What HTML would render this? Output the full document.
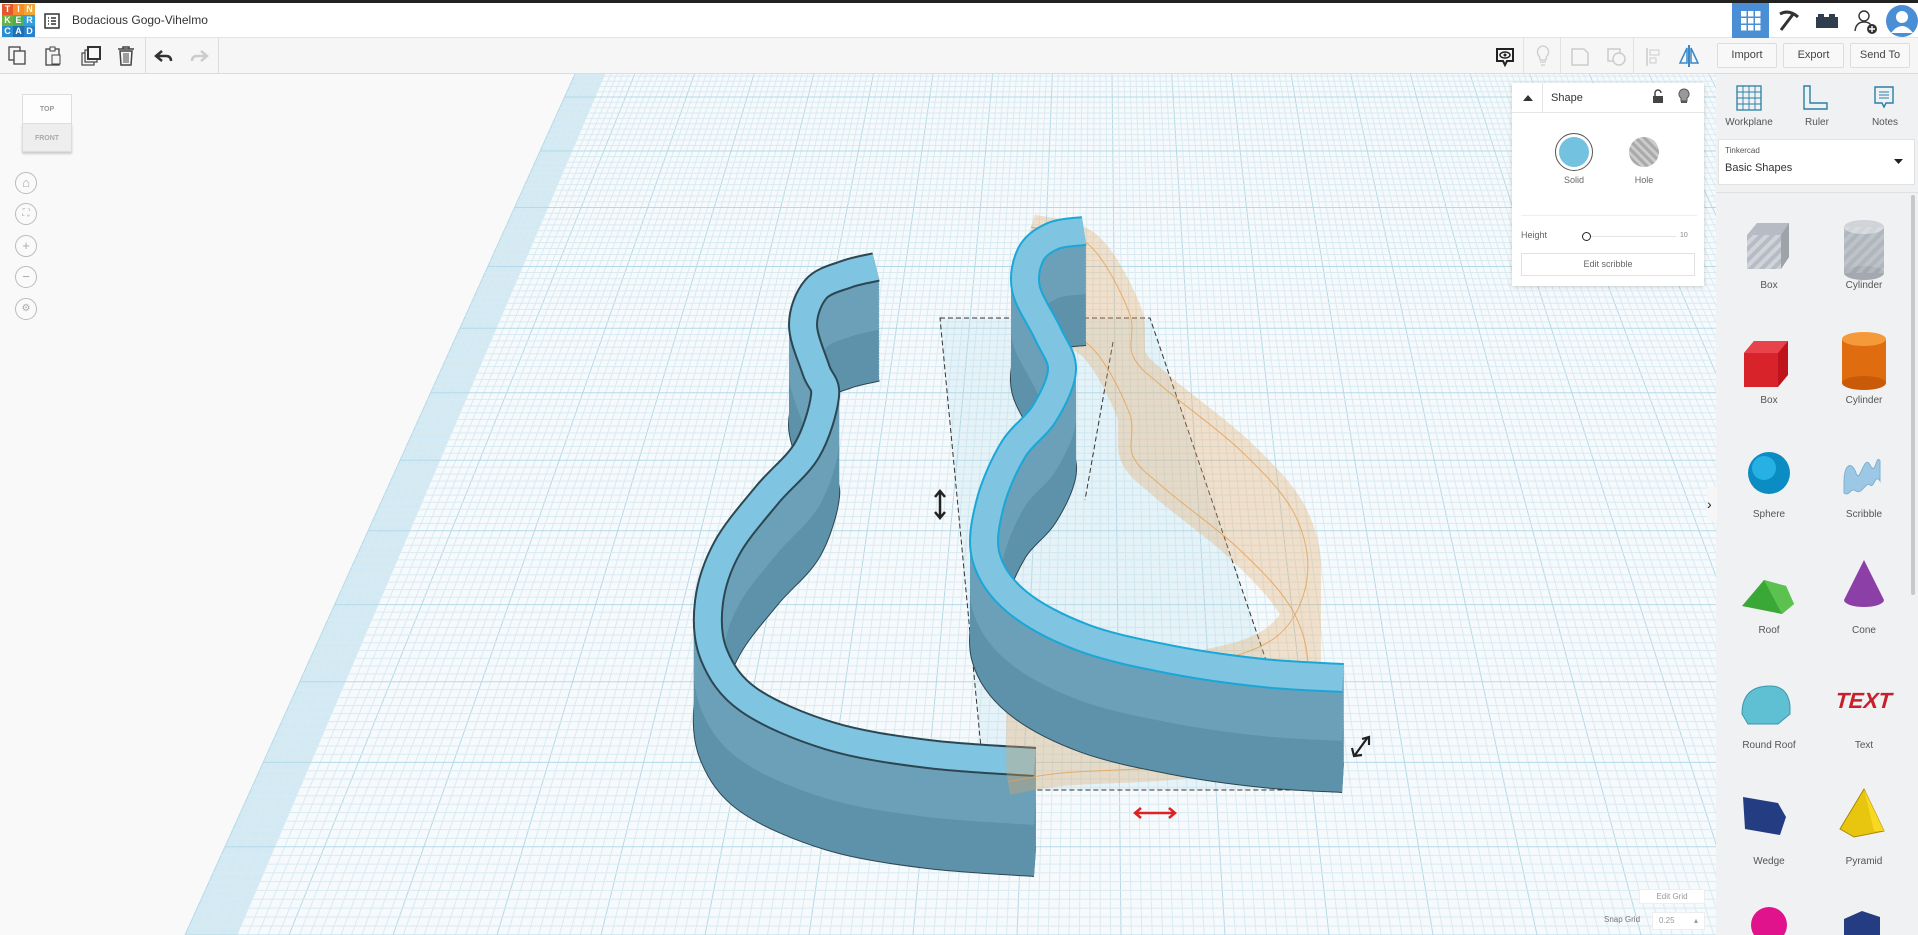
<!DOCTYPE html>
<html><head><meta charset="utf-8"><style>
*{box-sizing:border-box;margin:0;padding:0}
body{width:1918px;height:935px;overflow:hidden;background:#f9f9f9;font-family:"Liberation Sans",sans-serif;position:relative;color:#444}
.abs{position:absolute}
#hdr{left:0;top:0;width:1918px;height:38px;background:#fff;border-top:3px solid #222;border-bottom:1px solid #e3e3e3}
#tb{left:0;top:38px;width:1918px;height:36px;background:#f6f6f6;border-bottom:1px solid #dcdcdc}
.btn{position:absolute;top:5px;height:25px;border:1px solid #ddd;background:#f8f8f8;font-size:11px;color:#444;text-align:center;line-height:23px;border-radius:2px}
#rp{left:1716px;top:74px;width:202px;height:861px;background:#f0f1f3}
.lbl{position:absolute;font-size:10px;color:#555;text-align:center;width:90px}
.nav{position:absolute;left:15px;width:22px;height:22px;border:1px solid #bbb;border-radius:50%;background:#fafafa;color:#aaa;font-size:13px;text-align:center;line-height:19px}
</style></head><body>
<svg id="cv" class="abs" style="left:0;top:74px" width="1918" height="861"></svg>

<div id="hdr" class="abs">
 <div class="abs" style="left:2px;top:1px;width:33px;height:33px;display:grid;grid-template-columns:repeat(3,11px);font-size:9px;font-weight:bold;color:#fff;text-align:center;line-height:11px">
  <span style="background:#e4572e">T</span><span style="background:#f48d2a">I</span><span style="background:#f1a638">N</span>
  <span style="background:#66b245">K</span><span style="background:#4fae52">E</span><span style="background:#2e9fd8">R</span>
  <span style="background:#2a8fd0">C</span><span style="background:#1f6fb4">A</span><span style="background:#2b80c7">D</span>
 </div>
 <svg class="abs" style="left:44px;top:10px" width="16" height="16"><rect x="1" y="1" width="14" height="14" fill="none" stroke="#333" stroke-width="1.5"/><path d="M4 5h1M7 5h5M4 8h1M7 8h5M4 11h1M7 11h5" stroke="#333" stroke-width="1.4"/></svg>
 <div class="abs" style="left:72px;top:10px;font-size:12px;color:#333">Bodacious Gogo-Vihelmo</div>
 <div class="abs" style="left:1732px;top:0;width:37px;height:35px;background:#4a8ed6"></div>
 <svg class="abs" style="left:1741px;top:8px" width="20" height="20"><g fill="#fff"><rect x="0" y="0" width="5.5" height="5.5"/><rect x="7" y="0" width="5.5" height="5.5"/><rect x="14" y="0" width="5.5" height="5.5"/><rect x="0" y="7" width="5.5" height="5.5"/><rect x="7" y="7" width="5.5" height="5.5"/><rect x="14" y="7" width="5.5" height="5.5"/><rect x="0" y="14" width="5.5" height="5.5"/><rect x="7" y="14" width="5.5" height="5.5"/><rect x="14" y="14" width="5.5" height="5.5"/></g></svg>
 <svg class="abs" style="left:1777px;top:6px" width="24" height="24"><path d="M3 5 Q12 0 21 8 M17 4 L4 21" stroke="#333" stroke-width="3" fill="none"/></svg>
 <svg class="abs" style="left:1815px;top:10px" width="24" height="16"><rect x="1" y="4" width="22" height="11" fill="#2e3e4e"/><rect x="3" y="1" width="6" height="4" fill="#2e3e4e"/><rect x="14" y="1" width="6" height="4" fill="#2e3e4e"/></svg>
 <svg class="abs" style="left:1854px;top:6px" width="24" height="26"><circle cx="10" cy="7" r="5" fill="none" stroke="#333" stroke-width="1.4"/><path d="M1 22 Q2 13 10 13 Q15 13 17 16" fill="none" stroke="#333" stroke-width="1.4"/><circle cx="18" cy="20" r="5" fill="#333"/><path d="M18 17v6M15 20h6" stroke="#fff" stroke-width="1.4"/></svg>
 <svg class="abs" style="left:1885px;top:1px" width="33" height="34"><circle cx="17" cy="17" r="16" fill="#4a8ed6"/><circle cx="17" cy="13" r="6" fill="#fff"/><path d="M6 29 Q17 15 28 29" fill="#fff"/></svg>
</div>

<div id="tb" class="abs">
 <svg class="abs" style="left:8px;top:8px" width="20" height="20"><rect x="1" y="1" width="11" height="13" fill="none" stroke="#444" stroke-width="1.3"/><rect x="6" y="5" width="11" height="13" fill="#f6f6f6" stroke="#444" stroke-width="1.3"/></svg>
 <svg class="abs" style="left:43px;top:7px" width="20" height="22"><rect x="3" y="4" width="13" height="16" fill="none" stroke="#444" stroke-width="1.3"/><rect x="7" y="2" width="5" height="4" fill="#f6f6f6" stroke="#444"/><rect x="9" y="10" width="8" height="9" fill="#f6f6f6" stroke="#444"/></svg>
 <svg class="abs" style="left:80px;top:7px" width="22" height="22"><rect x="2" y="8" width="12" height="12" fill="none" stroke="#444" stroke-width="1.2"/><rect x="5" y="5" width="12" height="12" fill="#f6f6f6" stroke="#444" stroke-width="1.2"/><rect x="8" y="2" width="12" height="12" fill="#f6f6f6" stroke="#333" stroke-width="2"/></svg>
 <svg class="abs" style="left:116px;top:7px" width="20" height="22"><path d="M2 4h16M7 4V2h6v2" stroke="#444" stroke-width="1.5" fill="none"/><path d="M4 6h12l-1 14H5z" fill="none" stroke="#444" stroke-width="1.5"/><path d="M8 8v10M10 8v10M12 8v10" stroke="#444"/></svg>
 <div class="abs" style="left:145px;top:0;width:1px;height:36px;background:#ddd"></div>
 <svg class="abs" style="left:154px;top:11px" width="20" height="14"><path d="M8 2 L2 7 L8 12 M2 7 H12 Q17 7 17 12" stroke="#333" stroke-width="2.5" fill="none"/></svg>
 <svg class="abs" style="left:189px;top:11px" width="20" height="14"><path d="M12 2 L18 7 L12 12 M18 7 H8 Q3 7 3 12" stroke="#ccc" stroke-width="2.5" fill="none"/></svg>
 <div class="abs" style="left:218px;top:0;width:1px;height:36px;background:#ddd"></div>
 <svg class="abs" style="left:1495px;top:8px" width="20" height="22"><path d="M2 3h16v12H12l-2 4-2-4H2z" fill="none" stroke="#222" stroke-width="2"/><ellipse cx="10" cy="9" rx="5" ry="3" fill="none" stroke="#222" stroke-width="1.5"/><circle cx="10" cy="9" r="1.5" fill="#222"/></svg>
 <div class="abs" style="left:1523px;top:0;width:1px;height:36px;background:#e2e2e2"></div>
 <svg class="abs" style="left:1535px;top:7px" width="16" height="22"><path d="M8 1a6 6 0 0 0-4 10c1 1 1 3 1 4h6c0-1 0-3 1-4A6 6 0 0 0 8 1zM5 17h6M6 20h4" fill="none" stroke="#ccc" stroke-width="1.3"/></svg>
 <div class="abs" style="left:1560px;top:0;width:1px;height:36px;background:#e2e2e2"></div>
 <svg class="abs" style="left:1570px;top:9px" width="22" height="20"><path d="M2 2h12l4 4v12H2z" fill="none" stroke="#ccc" stroke-width="1.5"/></svg>
 <svg class="abs" style="left:1606px;top:9px" width="22" height="20"><rect x="2" y="2" width="12" height="12" fill="none" stroke="#ccc" stroke-width="1.5"/><circle cx="13" cy="12" r="6" fill="#f6f6f6" stroke="#ccc" stroke-width="1.5"/></svg>
 <div class="abs" style="left:1633px;top:0;width:1px;height:36px;background:#e2e2e2"></div>
 <svg class="abs" style="left:1645px;top:9px" width="18" height="20"><path d="M2 1v18" stroke="#ccc" stroke-width="1.5"/><rect x="5" y="3" width="9" height="5" fill="none" stroke="#ccc"/><rect x="5" y="11" width="6" height="5" fill="none" stroke="#ccc"/></svg>
 <svg class="abs" style="left:1677px;top:6px" width="24" height="24"><path d="M10 4L3 19h7z" fill="none" stroke="#3a88c8" stroke-width="1.5"/><path d="M14 4l7 15h-7z" fill="none" stroke="#3a88c8" stroke-width="1.5"/><path d="M12 1v22" stroke="#3a88c8" stroke-width="2"/></svg>
 <div class="btn" style="left:1717px;width:60px">Import</div>
 <div class="btn" style="left:1783px;width:61px">Export</div>
 <div class="btn" style="left:1850px;width:60px">Send To</div>
</div>

<div class="abs" style="left:22px;top:94px;width:50px;height:29px;background:#fdfdfd;border:1px solid #ddd;border-bottom:none;font-size:7px;color:#999;text-align:center;line-height:29px;font-weight:bold">TOP</div>
<div class="abs" style="left:22px;top:123px;width:50px;height:29px;background:#eee;border:1px solid #ddd;font-size:7px;color:#aaa;text-align:center;line-height:29px;font-weight:bold;box-shadow:0 2px 2px #ccc">FRONT</div>
<div class="nav" style="top:172px">⌂</div>
<div class="nav" style="top:203px;font-size:10px">⛶</div>
<div class="nav" style="top:235px">+</div>
<div class="nav" style="top:266px">−</div>
<div class="nav" style="top:298px;font-size:10px">⚙</div>

<div class="abs" style="left:1512px;top:83px;width:192px;height:203px;background:#fff;box-shadow:0 1px 4px rgba(0,0,0,.18)">
 <div class="abs" style="left:0;top:0;width:192px;height:30px;border-bottom:1px solid #e5e5e5"></div>
 <div class="abs" style="left:30px;top:0;width:1px;height:30px;background:#e5e5e5"></div>
 <svg class="abs" style="left:10px;top:11px" width="12" height="8"><path d="M1 7L6 1l5 6z" fill="#333"/></svg>
 <div class="abs" style="left:39px;top:9px;font-size:11px;color:#333">Shape</div>
 <svg class="abs" style="left:140px;top:6px" width="12" height="14"><path d="M3 7V4a3 3 0 0 1 6 0" fill="none" stroke="#444" stroke-width="1.5"/><rect x="1" y="7" width="10" height="7" fill="#444"/></svg>
 <svg class="abs" style="left:166px;top:5px" width="12" height="16"><path d="M6 1a5 5 0 0 0-3 9v3h6v-3a5 5 0 0 0-3-9z" fill="#999" stroke="#555"/><rect x="3" y="13" width="6" height="2" fill="#555"/></svg>
 <div class="abs" style="left:43px;top:50px;width:38px;height:38px;border-radius:50%;border:1px solid #555;background:#fff"></div>
 <div class="abs" style="left:47px;top:54px;width:30px;height:30px;border-radius:50%;background:#72c2e0"></div>
 <div class="abs" style="left:117px;top:54px;width:30px;height:30px;border-radius:50%;background:repeating-linear-gradient(45deg,#aaa 0 3px,#ccc 3px 6px)"></div>
 <div class="abs" style="left:17px;top:92px;width:90px;font-size:9px;color:#666;text-align:center">Solid</div>
 <div class="abs" style="left:87px;top:92px;width:90px;font-size:9px;color:#666;text-align:center">Hole</div>
 <div class="abs" style="left:9px;top:132px;width:176px;height:1px;background:#eee"></div>
 <div class="abs" style="left:9px;top:147px;font-size:9px;color:#666">Height</div>
 <div class="abs" style="left:78px;top:153px;width:86px;height:1px;background:#e5e5e5"></div>
 <div class="abs" style="left:70px;top:149px;width:9px;height:9px;border-radius:50%;border:1.5px solid #222;background:#fff"></div>
 <div class="abs" style="left:168px;top:149px;font-size:7px;color:#888">10</div>
 <div class="abs" style="left:9px;top:170px;width:174px;height:23px;border:1px solid #e2e2e2;font-size:9px;color:#666;text-align:center;line-height:21px">Edit scribble</div>
</div>

<div id="rp" class="abs">
 <svg class="abs" style="left:20px;top:11px" width="26" height="26"><rect x="1" y="1" width="24" height="24" fill="none" stroke="#2a7fa6" stroke-width="1.3"/><path d="M7 1v24M13 1v24M19 1v24M1 7h24M1 13h24M1 19h24" stroke="#2a7fa6" stroke-width=".9"/></svg>
 <div class="lbl" style="left:-12px;top:43px">Workplane</div>
 <svg class="abs" style="left:86px;top:11px" width="26" height="26"><path d="M2 1h6v17h17v6H2z" fill="none" stroke="#2a7fa6" stroke-width="1.4"/></svg>
 <div class="lbl" style="left:56px;top:43px">Ruler</div>
 <svg class="abs" style="left:157px;top:11px" width="22" height="26"><path d="M2 2h18v16h-7l-2 4-2-4H2z" fill="none" stroke="#2a7fa6" stroke-width="1.4"/><path d="M6 7h10M6 10h10M6 13h10" stroke="#2a7fa6"/></svg>
 <div class="lbl" style="left:124px;top:43px">Notes</div>
 <div class="abs" style="left:2px;top:65px;width:197px;height:46px;background:#fff;border:1px solid #e2e2e2"></div>
 <div class="abs" style="left:9px;top:72px;font-size:8px;color:#555">Tinkercad</div>
 <div class="abs" style="left:9px;top:88px;font-size:11px;color:#333">Basic Shapes</div>
 <svg class="abs" style="left:178px;top:85px" width="9" height="6"><path d="M0 0h9L4.5 5z" fill="#222"/></svg>
 <div class="abs" style="left:0;top:118px;width:202px;height:1px;background:#e0e0e0"></div>
 <div class="abs" style="left:195px;top:121px;width:4px;height:400px;background:#c8c8c8;border-radius:2px"></div>
</div>
<div class="abs" style="left:1707px;top:487px;width:10px;height:34px;background:#f6f6f6;font-size:14px;line-height:34px;color:#222">›</div>

<svg class="abs" style="left:1716px;top:195px" width="195" height="740">
 <defs><pattern id="st" width="8" height="8" patternUnits="userSpaceOnUse" patternTransform="rotate(45)"><rect width="4" height="8" fill="#ffffff" opacity=".35"/></pattern></defs>
 <g transform="translate(53,58)"><path d="M-22 -18l10-12h32v34l-8 12h-34z" fill="#b7bcc4"/><path d="M-22 -18h34v34h-34z" fill="url(#st)"/><path d="M12 -18l8-12v34l-8 12z" fill="#9ea3aa"/></g>
 <g transform="translate(148,58)"><rect x="-20" y="-26" width="40" height="46" fill="#b0b6bd"/><ellipse cx="0" cy="20" rx="20" ry="7" fill="#a4a9b0"/><ellipse cx="0" cy="-26" rx="20" ry="7" fill="#d0d4d8"/><rect x="-20" y="-26" width="40" height="46" fill="url(#st)" opacity=".5"/></g>
 <g transform="translate(53,170)"><path d="M-25 -12l10-12h34v34l-10 12h-34z" fill="#c0141c"/><path d="M-25 -12h34v34h-34z" fill="#d8232a"/><path d="M-25 -12l10-12h34l-10 12z" fill="#e8434a"/></g>
 <g transform="translate(148,170)"><rect x="-22" y="-26" width="44" height="44" fill="#e06c10"/><ellipse cx="0" cy="18" rx="22" ry="7" fill="#c85a08"/><ellipse cx="0" cy="-26" rx="22" ry="7" fill="#f59a3a"/></g>
 <g transform="translate(53,278)"><circle r="21" fill="#0b8cc2"/><circle cx="-5" cy="-5" r="12" fill="#26b0e3"/></g>
 <g transform="translate(148,278)"><path d="M-20 10c0-20 8-22 12-10s8-20 14-8 6-12 10-4v20c-5-8-6 8-10 4s-8 10-14 6-6 6-12 2z" fill="#9cc8e6" stroke="#7fb0d0"/></g>
 <g transform="translate(53,393)"><path d="M-27 18l22-26 22 6 8 18-12 10z" fill="#3aa836"/><path d="M-5 -8l22 6 8 18-12 10z" fill="#5cc24f"/></g>
 <g transform="translate(148,393)"><path d="M0 -28L-20 12a20 7 0 0 0 40 0z" fill="#8c3fa6"/></g>
 <g transform="translate(53,505)"><path d="M-27 14q0-28 28-28q18 0 20 20v8l-12 10h-30z" fill="#5fbfd3" stroke="#3c97ab"/></g>
 <g transform="translate(148,505)"><text x="-28" y="8" font-size="22" font-weight="bold" fill="#c8202a" font-family="Liberation Sans" transform="skewX(-15)">TEXT</text></g>
 <g transform="translate(53,622)"><path d="M-26 -20l35 6 8 14-6 18-35-6z" fill="#243c82"/></g>
 <g transform="translate(148,622)"><path d="M0 -28l-24 40 14 8 30-6z" fill="#e8c610" stroke="#a88a00"/><path d="M0 -28l20 42-10 0z" fill="#f8d820"/></g>
 <circle cx="53" cy="730" r="18" fill="#e0128c"/>
 <path d="M128 724l18-8 18 6v20h-36z" fill="#243c82"/>
</svg>
<div class="lbl" style="left:1724px;top:280px">Box</div><div class="lbl" style="left:1819px;top:280px">Cylinder</div>
<div class="lbl" style="left:1724px;top:395px">Box</div><div class="lbl" style="left:1819px;top:395px">Cylinder</div>
<div class="lbl" style="left:1724px;top:509px">Sphere</div><div class="lbl" style="left:1819px;top:509px">Scribble</div>
<div class="lbl" style="left:1724px;top:625px">Roof</div><div class="lbl" style="left:1819px;top:625px">Cone</div>
<div class="lbl" style="left:1724px;top:740px">Round Roof</div><div class="lbl" style="left:1819px;top:740px">Text</div>
<div class="lbl" style="left:1724px;top:856px">Wedge</div><div class="lbl" style="left:1819px;top:856px">Pyramid</div>

<div class="abs" style="left:1639px;top:889px;width:66px;height:15px;background:#fff;border:1px solid #eee;font-size:8px;color:#999;text-align:center;line-height:13px">Edit Grid</div>
<div class="abs" style="left:1604px;top:915px;font-size:8px;color:#777">Snap Grid</div>
<div class="abs" style="left:1652px;top:912px;width:53px;height:18px;background:#fff;border:1px solid #eee;font-size:8px;color:#999;line-height:16px;padding-left:6px">0.25 <span style="float:right;margin-right:6px">▴</span></div>

<script>
(function(){
var s=document.getElementById('cv'),h='';
var oy=74; function Y(y){return y-oy;}
var vx=1100,vy=-1085,yb=935;
function xAt(bx,y){return vx+(bx-vx)*(y-vy)/(yb-vy);}
var L0=185;
h+='<polygon points="'+xAt(L0,74)+','+Y(74)+' 1918,'+Y(74)+' 1918,861 '+L0+',861" fill="#f6fafc"/>';
h+='<polygon points="'+xAt(L0,74)+','+Y(74)+' '+xAt(L0+52,74)+','+Y(74)+' '+(L0+52)+',861 '+L0+',861" fill="#d3eaf4"/>';
for(var i=0;i<=200;i++){var bx=L0+i*10.4;var maj=i%10==0;
 h+='<line x1="'+xAt(bx,74).toFixed(1)+'" y1="0" x2="'+bx.toFixed(1)+'" y2="861" stroke="'+(maj?'#b5d9e6':'#d9ebf1')+'" stroke-width="1"/>';}
var y=935,k=0;while(y>74){var maj=k%10==0;var xl=xAt(L0,y);
 h+='<line x1="'+xl.toFixed(1)+'" y1="'+Y(y).toFixed(1)+'" x2="1918" y2="'+Y(y).toFixed(1)+'" stroke="'+(maj?'#b5d9e6':'#d9ebf1')+'"/>';
 y-=9*(y-vy)/(yb-vy);k++;}
h+='<polygon points="940,'+Y(318)+' 1150,'+Y(318)+' 1310,'+Y(790)+' 985,'+Y(790)+'" fill="rgba(180,220,235,.25)" stroke="#333" stroke-dasharray="5,3" stroke-width="1"/>';
h+='<line x1="1113" y1="'+Y(342)+'" x2="1085" y2="'+Y(500)+'" stroke="#333" stroke-dasharray="5,3"/>';
function path(p){var d='M'+p[0][0]+' '+Y(p[0][1]);for(var i=0;i<p.length-1;i++){var a=p[i-1]||p[i],b=p[i],c=p[i+1],e=p[i+2]||c;
 d+=' C'+(b[0]+(c[0]-a[0])/6).toFixed(1)+' '+Y(b[1]+(c[1]-a[1])/6).toFixed(1)+' '+(c[0]-(e[0]-b[0])/6).toFixed(1)+' '+Y(c[1]-(e[1]-b[1])/6).toFixed(1)+' '+c[0]+' '+Y(c[1]);}return d;}
function solid(p,H,w,out){var d=path(p),r='';
 r+='<path d="'+d+'" transform="translate(0,'+H+')" fill="none" stroke="#2c4652" stroke-width="'+(w+3)+'"/>';
 for(var t=H;t>=0;t-=3)r+='<path d="'+d+'" transform="translate(0,'+t+')" fill="none" stroke="'+(t>H*0.5?'#5d92aa':'#6ba0b8')+'" stroke-width="'+(w+1)+'"/>';
 r+='<path d="'+d+'" fill="none" stroke="'+out+'" stroke-width="'+(w+3)+'"/>';
 r+='<path d="'+d+'" fill="none" stroke="#7fc4e0" stroke-width="'+(w-1)+'"/>';return r;}
var A=[[876,267],[847,274],[816,289],[803,325],[816,370],[825,396],[807,450],[767,495],[727,548],[709,602],[714,655],[749,700],[830,736],[928,754],[1035,762]];
h+=solid(A,100,27,'#2c4652');
var G=[[1031,227],[1089,245],[1129,312],[1133,356],[1164,388],[1240,450],[1294,513],[1307,579],[1276,637],[1196,664],[1062,673],[1008,682]];
var gd=path(G),g='<g opacity=".32">';for(var t=100;t>=0;t-=4)g+='<path d="'+gd+'" transform="translate(0,'+t+')" fill="none" stroke="#e6a865" stroke-width="26"/>';
g+='</g><path d="'+gd+'" fill="none" stroke="#e3a055" stroke-width="1" opacity=".8"/><path d="'+gd+'" transform="translate(0,100)" fill="none" stroke="#e3a055" stroke-width="1" opacity=".8"/>';h+=g;
var B=[[1084,231],[1053,236],[1031,254],[1026,289],[1048,334],[1062,370],[1044,414],[1013,450],[990,504],[986,557],[1017,602],[1084,638],[1173,660],[1263,673],[1343,678]];
h+=solid(B,100,27,'#1aa7d8');
h+='<path d="M940 '+Y(492)+'v26M935 '+Y(497)+'l5-6 5 6M935 '+Y(512)+'l5 6 5-6" stroke="#222" stroke-width="2.5" fill="none"/>';
h+='<path d="M1135 '+Y(813)+'h40M1141 '+Y(808)+'l-6 5 6 5M1169 '+Y(808)+'l6 5-6 5" stroke="#d22" stroke-width="2.5" fill="none"/>';
h+='<path d="M1355 '+Y(755)+'l13-18M1352 '+Y(748)+'l2 8 8-1M1362 '+Y(739)+'l7-2 0 8" stroke="#222" stroke-width="2.2" fill="none"/>';
s.innerHTML=h;})();
</script>
</body></html>
